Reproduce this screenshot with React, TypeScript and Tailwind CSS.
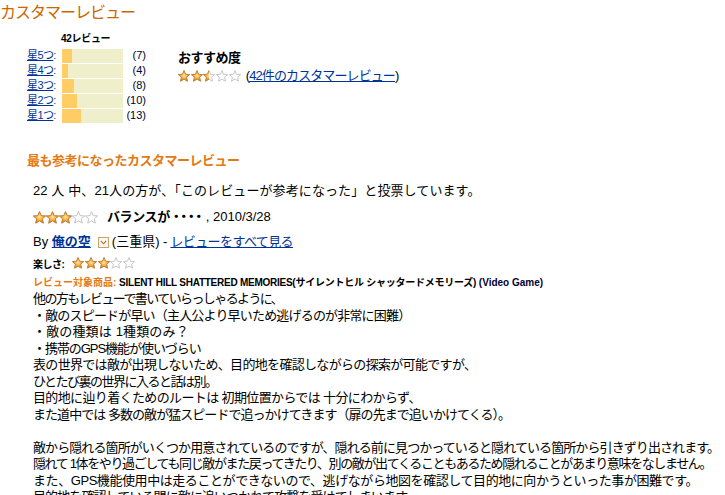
import React from "react";

const FONT = '"Liberation Sans", Arial, "Noto Sans CJK JP", sans-serif';

function Star({ fill, size = 12, id }: { fill: number; size?: number; id: string }) {
  const d = "M6 0.6 L7.6 4.3 L11.6 4.6 L8.6 7.2 L9.5 11.2 L6 9.1 L2.5 11.2 L3.4 7.2 L0.4 4.6 L4.4 4.3 Z";
  return (
    <svg width={size} height={size} viewBox="0 0 12 12" className="block">
      <defs>
        <radialGradient id={`g${id}`} cx="50%" cy="45%" r="60%">
          <stop offset="0%" stopColor="#ffe9a0" />
          <stop offset="55%" stopColor="#f3a53a" />
          <stop offset="100%" stopColor="#c8761a" />
        </radialGradient>
        <clipPath id={`c${id}`}>
          <rect x="0" y="0" width={12 * fill} height="12" />
        </clipPath>
      </defs>
      <path d={d} fill="#fff" stroke="#b9b9b9" strokeWidth="0.8" strokeLinejoin="round" />
      {fill > 0 && (
        <path d={d} fill={`url(#g${id})`} stroke="#c27a22" strokeWidth="0.8" strokeLinejoin="round" clipPath={`url(#c${id})`} />
      )}
    </svg>
  );
}

function Stars({ value, id, size = 12, gap = 1 }: { value: number; id: string; size?: number; gap?: number }) {
  return (
    <span className="inline-flex items-center" style={{ gap }}>
      {[0, 1, 2, 3, 4].map((i) => {
        const f = value >= i + 1 ? 1 : value > i ? 0.5 : 0;
        return <Star key={i} fill={f} size={size} id={`${id}${i}`} />;
      })}
    </span>
  );
}

const rows = [
  { label: "星5つ", count: 7 },
  { label: "星4つ", count: 4 },
  { label: "星3つ", count: 8 },
  { label: "星2つ", count: 10 },
  { label: "星1つ", count: 13 },
];

export default function App() {
  return (
    <div
      className="w-[725px] h-[495px] overflow-hidden bg-white text-black"
      style={{ fontFamily: FONT }}
    >
      <div className="pt-[2px] text-[16px] leading-[22px] tracking-[-1px] text-[#cc6600]">カスタマーレビュー</div>

      <div className="flex mt-[8px]">
        <div className="pl-[27px] w-[178px]">
          <div className="pl-[34px] text-[10px] font-bold leading-[14px] tracking-[-0.3px]">42レビュー</div>
          <div className="flex flex-col mt-[2px]">
            {rows.map((r) => (
              <div key={r.label} className="flex items-center h-[15px] text-[11px]">
                <span className="w-[35px] whitespace-nowrap">
                  <a className="text-[#003399] underline tracking-[-0.6px]">{r.label}</a>
                  <span className="text-[#334477]">:</span>
                </span>
                <div className="relative w-[61px] h-[14px] bg-[#efefcc]">
                  <div className="absolute left-0 top-0 h-[14px] bg-[#ffcc66]" style={{ width: Math.round((r.count / 42) * 61) }} />
                </div>
                <span className="w-[23px] text-right text-[#000033]">({r.count})</span>
              </div>
            ))}
          </div>
        </div>
        <div className="pt-[18px]">
          <div className="text-[13px] font-bold leading-[16px] tracking-[-0.5px]">おすすめ度</div>
          <div className="flex items-center mt-[2px] text-[13px] leading-[16px]">
            <Stars value={2.5} id="a" size={12} gap={0.7} />
            <span className="ml-[5px] tracking-[-0.9px]">
              (<a className="text-[#003399] underline">42件のカスタマーレビュー</a>)
            </span>
          </div>
        </div>
      </div>

      <div className="mt-[30px] pl-[27px] text-[13px] font-bold leading-[16px] tracking-[-0.5px] text-[#e47911]">
        最も参考になったカスタマーレビュー
      </div>

      <div className="pl-[33px] mt-[14px] text-[13px]">
        <div className="leading-[16px] tracking-[0.1px]">22 人 中、21人の方が、「このレビューが参考になった」と投票しています。</div>
        <div className="flex items-center mt-[10px] leading-[16px]">
          <Stars value={3} id="b" size={13} gap={0} />
          <span className="ml-[9px] font-bold tracking-[-0.4px]">バランスが</span>
          <span className="font-bold tracking-[-5.5px]">・・・・</span>
          <span className="ml-[6px]">, 2010/3/28</span>
        </div>
        <div className="flex items-center mt-[9px] leading-[16px]">
          <span>By&nbsp;</span>
          <a className="text-[#003399] underline font-bold">俺の空</a>
          <span className="ml-[7px] inline-flex items-center justify-center w-[11px] h-[11px] border border-[#c9a36a] bg-[#fbf6ee]">
            <svg width="7" height="5" viewBox="0 0 7 5">
              <path d="M0.8 0.8 L3.5 3.8 L6.2 0.8" fill="none" stroke="#a07030" strokeWidth="1.1" />
            </svg>
          </span>
          <span className="ml-[3px] tracking-[0px]">(三重県) - </span>
          <a className="ml-[3px] text-[#003399] underline tracking-[-0.6px]">レビューをすべて見る</a>
        </div>
        <div className="flex items-center mt-[7px] leading-[14px]">
          <span className="text-[10px] font-bold tracking-[-0.5px]">楽しさ:</span>
          <span className="ml-[8px]"><Stars value={3} id="c" size={12} gap={0.6} /></span>
        </div>
        <div className="mt-[4px] text-[10px] font-bold leading-[14px] whitespace-nowrap">
          <span className="text-[#e47911] tracking-[0px]">レビュー対象商品: </span>
          <span className="tracking-[-0.25px]">SILENT HILL SHATTERED MEMORIES(サイレントヒル シャッタードメモリーズ)</span>
          <span className="text-[#000033]"> (Video Game)</span>
        </div>
        <div className="mt-[1px] leading-[16.5px] whitespace-nowrap">
          <div className="tracking-[-1.6px]">他の方もレビューで書いていらっしゃるように、</div>
          <div className="tracking-[-0.82px]">・敵のスピードが早い（主人公より早いため逃げるのが非常に困難）</div>
          <div className="tracking-[0.15px]">・敵の種類は 1種類のみ？</div>
          <div className="tracking-[-1.05px]">・携帯のGPS機能が使いづらい</div>
          <div className="tracking-[-0.68px]">表の世界では敵が出現しないため、目的地を確認しながらの探索が可能ですが、</div>
          <div className="tracking-[-1.5px]">ひとたび裏の世界に入ると話は別。</div>
          <div className="tracking-[-0.63px]">目的地に辿り着くためのルートは 初期位置からでは 十分にわからず、</div>
          <div className="tracking-[-0.95px]">また道中では 多数の敵が猛スピードで追っかけてきます（扉の先まで追いかけてくる）。</div>
          <div>&nbsp;</div>
          <div className="tracking-[-0.91px]">敵から隠れる箇所がいくつか用意されているのですが、隠れる前に見つかっていると隠れている箇所から引きずり出されます。</div>
          <div className="tracking-[-1.38px]">隠れて 1体をやり過ごしても同じ敵がまた戻ってきたり、別の敵が出てくることもあるため隠れることがあまり意味をなしません。</div>
          <div className="tracking-[-0.43px]">また、GPS機能使用中は走ることができないので、逃げながら地図を確認して目的地に向かうといった事が困難です。</div>
          <div className="tracking-[-0.9px]">目的地を確認している間に敵に追いつかれて攻撃を受けてしまいます。</div>
        </div>
      </div>
    </div>
  );
}
